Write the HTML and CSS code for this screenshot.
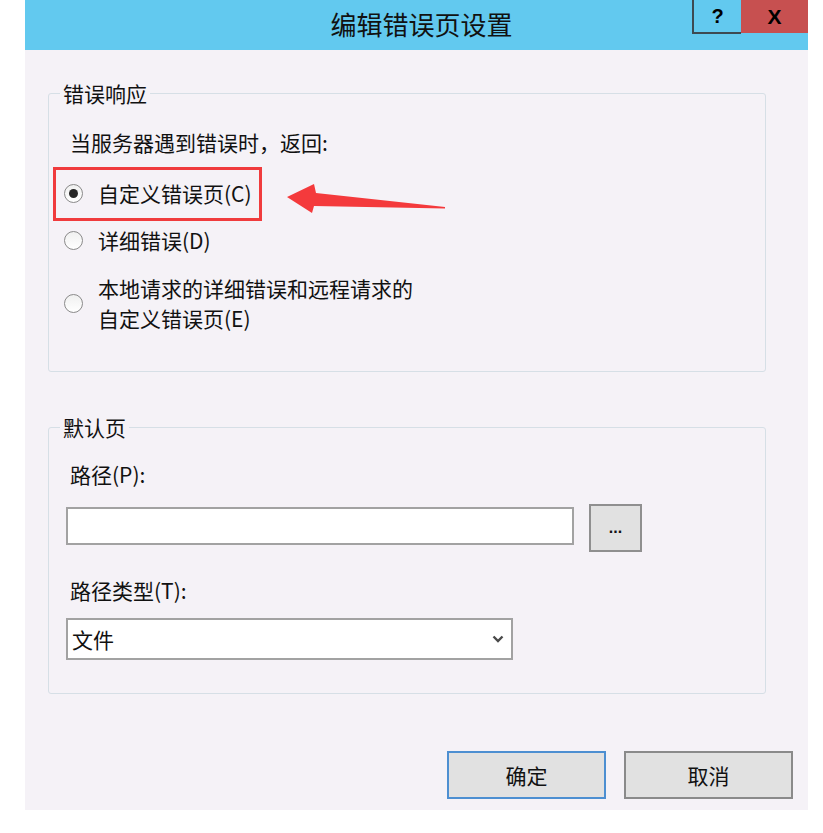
FILE: index.html
```html
<!DOCTYPE html>
<html lang="zh-CN">
<head>
  <meta charset="UTF-8" />
  <meta name="viewport" content="width=device-width, initial-scale=1.0" />
  <title>编辑错误页设置</title>
  <link rel="stylesheet" href="styles.css">
</head>
<body>
  <div class="dialog">
    <div class="titlebar">
      <div class="title">编辑错误页设置</div>
      <div class="controls">
        <div class="ctl help">?</div>
        <div class="ctl close">X</div>
      </div>
    </div>

    <div class="content">
      <fieldset class="group group-response">
        <legend>错误响应</legend>
        <div class="prompt">当服务器遇到错误时，返回:</div>

        <div class="callout">
          <div class="highlight">
            <label class="option">
              <input type="radio" name="resp" checked />
              <span>自定义错误页(C)</span>
            </label>
          </div>
          <svg class="arrow" width="162" height="40" viewBox="0 0 162 40">
            <polygon points="2,23 29,10 31,19 160,33 160,34.5 29,32 27,39" />
          </svg>
        </div>

        <label class="option opt-detail">
          <input type="radio" name="resp" />
          <span>详细错误(D)</span>
        </label>

        <label class="option opt-mixed">
          <input type="radio" name="resp" />
          <span>本地请求的详细错误和远程请求的<br>自定义错误页(E)</span>
        </label>
      </fieldset>

      <fieldset class="group group-default">
        <legend>默认页</legend>
        <div class="field-label">路径(P):</div>
        <div class="path-row">
          <input class="path-input" type="text" />
          <button class="browse">...</button>
        </div>
        <div class="field-label type-label">路径类型(T):</div>
        <div class="select">
          <span>文件</span>
          <svg width="12" height="8" viewBox="0 0 12 8">
            <polyline points="1.5,1.5 6,6 10.5,1.5" />
          </svg>
        </div>
      </fieldset>

      <div class="actions">
        <button class="btn primary">确定</button>
        <button class="btn">取消</button>
      </div>
    </div>
  </div>
</body>
</html>
```

FILE: styles.css
```css
* {
  box-sizing: border-box;
}

body {
  margin: 0;
  padding: 0;
  background: #ffffff;
  font-family: "Noto Sans CJK SC", "Noto Sans", sans-serif;
  font-size: 21px;
  color: #111;
}

.dialog {
  margin-left: 25px;
  width: 783px;
  height: 810px;
  background: #f5f2f7;
}

/* title bar */
.titlebar {
  position: relative;
  height: 50px;
  background: #62c9ef;
}

.title {
  padding-left: 10px;
  text-align: center;
  font-size: 26px;
  line-height: 48px;
  color: #111;
}

.controls {
  position: absolute;
  top: 0;
  right: 0;
  display: flex;
}

.ctl {
  height: 34px;
  display: flex;
  align-items: center;
  justify-content: center;
  font-family: "Liberation Sans", Arial, sans-serif;
  font-weight: bold;
  color: #000;
}

.help {
  width: 49px;
  border-left: 2px solid #3d4a52;
  border-bottom: 2px solid #3d4a52;
  font-size: 20px;
}

.close {
  width: 67px;
  height: 33px;
  background: #c75050;
  font-size: 21px;
}

/* content */
.content {
  padding-left: 23px;
}

.group {
  width: 718px;
  margin: 0;
  padding: 0;
  border: 1px solid #d6dfe6;
  border-radius: 3px;
  min-inline-size: 0;
}

.group legend {
  margin-left: 11px;
  padding: 0 3px;
  line-height: 24px;
  font-size: 21px;
}

.group-response {
  margin-top: 31px;
  padding-bottom: 38px;
}

.group-default {
  margin-top: 43px;
  padding-bottom: 33px;
}

.prompt {
  margin: 25px 0 0 21px;
  line-height: 24px;
}

.callout {
  display: flex;
  align-items: center;
  margin-top: 13px;
}

.highlight {
  margin-left: 4px;
  padding: 11px 7px 13px 8px;
  border: 3px solid #f03b3d;
}

.arrow {
  margin-left: 23px;
}

.arrow polygon {
  fill: #f43a3c;
}

.option {
  display: flex;
  align-items: center;
  gap: 15px;
  line-height: 24px;
}

.option input {
  appearance: none;
  width: 19px;
  height: 19px;
  margin: 0;
  border: 1.5px solid #8a8a8a;
  border-radius: 50%;
  background: linear-gradient(#f0f0f0, #ffffff);
  display: flex;
  align-items: center;
  justify-content: center;
  flex-shrink: 0;
}

.option input:checked::after {
  content: "";
  width: 9px;
  height: 9px;
  border-radius: 50%;
  background: #262626;
}

.opt-detail {
  margin: 7px 0 0 15px;
}

.opt-mixed {
  margin: 21px 0 0 15px;
  line-height: 30px;
}

/* default page group */
.field-label {
  margin: 23px 0 0 21px;
  line-height: 24px;
}

.type-label {
  margin-top: 26px;
}

.path-row {
  display: flex;
  align-items: flex-start;
  margin: 18px 0 0 17px;
}

.path-input {
  width: 508px;
  height: 38px;
  margin: 3px 0 0 0;
  border: 2px solid #a2a2a2;
  background: #fff;
  font: inherit;
}

.browse {
  width: 53px;
  height: 48px;
  margin-left: 15px;
  padding: 0;
  border: 2px solid #8f8f8f;
  background: #e1e1e1;
  font-family: "Liberation Sans", Arial, sans-serif;
  font-size: 16px;
  font-weight: bold;
  color: #111;
}

.select {
  display: flex;
  align-items: center;
  justify-content: space-between;
  width: 447px;
  height: 42px;
  margin: 16px 0 0 17px;
  padding: 0 7px 0 4px;
  border: 2px solid #a2a2a2;
  background: #fff;
}

.select polyline {
  fill: none;
  stroke: #4a4a4a;
  stroke-width: 2.4;
}

/* footer buttons */
.actions {
  display: flex;
  justify-content: flex-end;
  gap: 18px;
  margin-top: 57px;
  padding-right: 15px;
}

.btn {
  width: 169px;
  height: 48px;
  padding: 0;
  border: 2px solid #8a8a8a;
  background: #e1e1e1;
  font-family: inherit;
  font-size: 21px;
  color: #111;
}

.btn.primary {
  width: 159px;
  border-color: #4d8fd1;
}
```
